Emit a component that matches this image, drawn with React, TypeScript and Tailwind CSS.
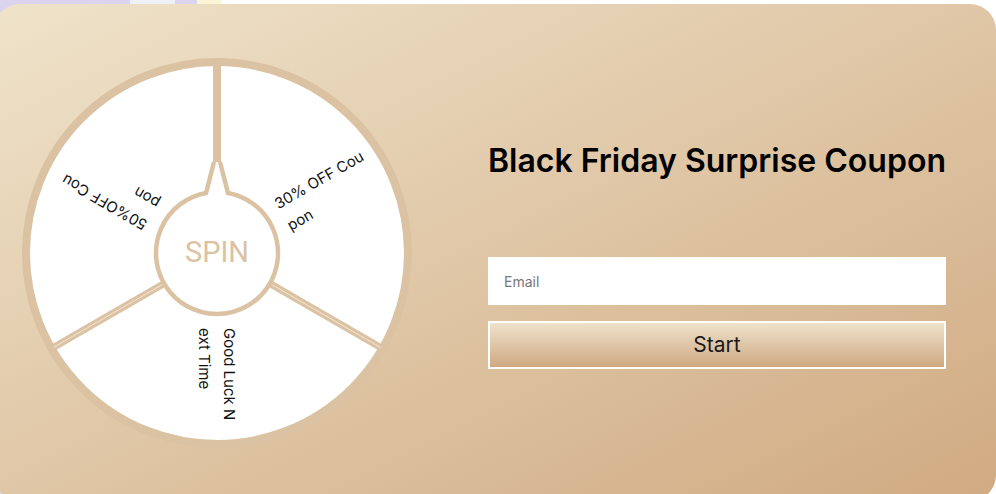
import React from "react";

const TAN = "#dbc2a2";

// each prize label reads outward from the hub
const segments = [
  { rot: -30, lines: ["30% OFF Cou", "pon"] },
  { rot: 90, lines: ["Good Luck N", "ext Time"] },
  { rot: 210, lines: ["50%OFF Cou", "pon"] },
];

function Wheel() {
  const c = 195;
  return (
    <div className="h-[390px] w-[390px] shrink-0">
      <svg width="390" height="390" viewBox="0 0 390 390">
        <circle cx={c} cy={c} r="191" fill="#fff" stroke={TAN} strokeWidth="8" />
        {[210, 330].map((a) => {
          const r = (a * Math.PI) / 180;
          const x1 = c + Math.cos(r) * 40;
          const y1 = c - Math.sin(r) * 40;
          const x2 = c + Math.cos(r) * 189;
          const y2 = c - Math.sin(r) * 189;
          return (
            <g key={a}>
              <line x1={x1} y1={y1} x2={x2} y2={y2} stroke={TAN} strokeWidth="7" />
              <line x1={x1} y1={y1} x2={x2} y2={y2} stroke="#f1e7d9" strokeWidth="1" />
            </g>
          );
        })}
        <line x1={c} y1="4" x2={c} y2="110" stroke={TAN} strokeWidth="8" />
        <path
          d="M192 104 L184 135 A61 61 0 1 0 206 135 L198 104"
          fill="#fff"
          stroke={TAN}
          strokeWidth="4.5"
        />
        <text
          x={c}
          y="204"
          textAnchor="middle"
          fill={TAN}
          fontSize="29"
          fontFamily="Roboto, sans-serif"
        >
          SPIN
        </text>
        {segments.map((s) => (
          <g key={s.rot} transform={`translate(${c} ${c}) rotate(${s.rot})`}>
            {s.lines.map((t, i) => (
              <text
                key={i}
                x="75"
                y={-7 + i * 25}
                fill="#111"
                fontSize="15"
                fontFamily="Inter, sans-serif"
              >
                {t}
              </text>
            ))}
          </g>
        ))}
      </svg>
    </div>
  );
}

export default function App() {
  return (
    <div className="h-[494px] w-[996px] overflow-hidden bg-[linear-gradient(to_right,#dcd4ee_0_130px,#eef1f8_130px_175px,#dcd4ee_175px_197px,#fdf6d6_197px_222px,#ffffff_222px)] pt-[4px] font-['Inter',sans-serif]">
      <div className="-ml-[6px] flex h-[497px] w-[1002px] items-start rounded-[26px] bg-[linear-gradient(to_bottom_right,#efe3ca,#d0aa82)] pl-[28px]">
        <div className="mt-[54px]">
          <Wheel />
        </div>
        <div className="ml-[76px] mt-[139px] flex w-[458px] flex-col">
          <h1 className="whitespace-nowrap text-[32px] font-semibold leading-[36px] text-black">
            Black Friday Surprise Coupon
          </h1>
          <input
            type="email"
            placeholder="Email"
            className="mt-[78px] h-[48px] w-full bg-white px-[16px] text-[14px] text-[#333] outline-none placeholder:text-[#777]"
          />
          <button className="mt-[16px] h-[48px] w-full border-2 border-white bg-[linear-gradient(to_bottom,#eee2cb,#cfa983)] text-[21px] text-[#1a1a1a]">
            Start
          </button>
        </div>
      </div>
    </div>
  );
}
